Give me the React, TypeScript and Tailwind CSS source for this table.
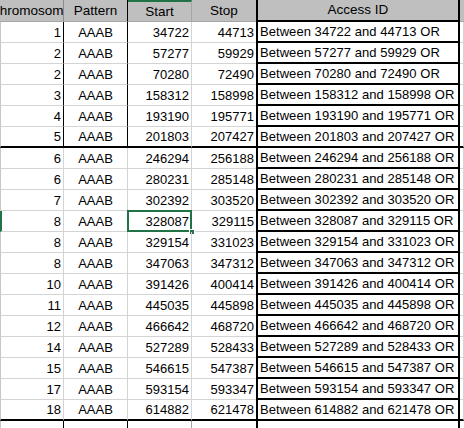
import React from "react";

type Row = { chr: number; start: number; stop: number };

const ROWS: Row[] = [
  { chr: 1, start: 34722, stop: 44713 },
  { chr: 2, start: 57277, stop: 59929 },
  { chr: 2, start: 70280, stop: 72490 },
  { chr: 3, start: 158312, stop: 158998 },
  { chr: 4, start: 193190, stop: 195771 },
  { chr: 5, start: 201803, stop: 207427 },
  { chr: 6, start: 246294, stop: 256188 },
  { chr: 6, start: 280231, stop: 285148 },
  { chr: 7, start: 302392, stop: 303520 },
  { chr: 8, start: 328087, stop: 329115 },
  { chr: 8, start: 329154, stop: 331023 },
  { chr: 8, start: 347063, stop: 347312 },
  { chr: 10, start: 391426, stop: 400414 },
  { chr: 11, start: 445035, stop: 445898 },
  { chr: 12, start: 466642, stop: 468720 },
  { chr: 14, start: 527289, stop: 528433 },
  { chr: 15, start: 546615, stop: 547387 },
  { chr: 17, start: 593154, stop: 593347 },
  { chr: 18, start: 614882, stop: 621478 },
];

const SELECTED = 9;

function DataRow({ row, index }: { row: Row; index: number }) {
  const top = index < 6;
  const thickBottom = index === 5 || index === ROWS.length - 1;
  const selected = index === SELECTED;

  const bottom = thickBottom ? "border-b-2 border-b-black" : "border-b border-b-[#d4d4d4]";
  const darkSide = top ? "border-r border-r-black" : "border-r border-r-[#d4d4d4]";

  return (
    <div className="flex h-[21px]">
      <div
        className={`w-[64px] flex items-center justify-end pr-[2px] ${darkSide} ${bottom} ${
          selected ? "border-l-2 border-l-[#217346]" : "border-l border-l-[#c6c6c6]"
        }`}
      >
        {row.chr}
      </div>
      <div className={`w-[64px] flex items-center justify-center ${darkSide} ${bottom}`}>AAAB</div>
      <div className={`relative w-[64px] flex items-center justify-end pr-[2px] border-r border-r-[#d4d4d4] ${bottom}`}>
        {row.start}
        {selected && (
          <>
            <div className="absolute left-[-1px] top-[-1px] right-[-1px] bottom-[-1px] border-2 border-[#217346]" />
            <div className="absolute right-[-4px] bottom-[-4px] w-[6px] h-[6px] bg-[#217346] border border-white" />
          </>
        )}
      </div>
      <div className={`w-[64px] flex items-center justify-end pr-[2px] ${bottom}`}>{row.stop}</div>
      <div className="w-[204px] flex items-center pl-[2px] tracking-[0.05px] border-l-2 border-r-2 border-black border-b-2 border-b-black whitespace-nowrap">
        Between {row.start} and {row.stop} OR
      </div>
      <div className={`w-[4px] border-r border-r-[#d4d4d4] ${bottom}`} />
    </div>
  );
}

export default function App() {
  return (
    <div
      className="w-[464px] h-[428px] overflow-hidden bg-white text-black text-[13px] leading-none"
      style={{ fontFamily: '"Liberation Sans", Arial, sans-serif' }}
    >
      {/* header */}
      <div className="flex h-[22px] bg-[#bfbfbf] text-[13.5px]">
        <div className="w-[64px] flex items-center justify-end overflow-hidden border-r border-r-[#8c8c8c] border-b border-b-[#a6a6a6] whitespace-nowrap">
          <span className="mr-[-8px]">Chromosome</span>
        </div>
        <div className="w-[64px] flex items-center justify-center border-r border-r-black border-b border-b-[#a6a6a6]">
          Pattern
        </div>
        <div className="w-[64px] flex items-center justify-center border-t-2 border-t-[#217346] border-r border-r-[#a6a6a6] border-b border-b-[#a6a6a6]">
          Start
        </div>
        <div className="w-[64px] flex items-center justify-center border-b border-b-[#a6a6a6]">Stop</div>
        <div className="w-[204px] flex items-center justify-center border-l-2 border-r-2 border-black border-b-2 border-b-black">
          Access ID
        </div>
        <div className="w-[4px] border-b border-b-[#a6a6a6]" />
      </div>

      {ROWS.map((r, i) => (
        <DataRow key={i} row={r} index={i} />
      ))}

      {/* empty row below the table */}
      <div className="flex h-[21px]">
        <div className="w-[64px] border-r border-r-black border-l border-l-[#c6c6c6]" />
        <div className="w-[64px] border-r border-r-black" />
        <div className="w-[64px] border-r border-r-[#a6a6a6]" />
        <div className="w-[64px]" />
        <div className="w-[204px] border-l-2 border-r-2 border-black" />
        <div className="w-[4px]" />
      </div>
    </div>
  );
}
